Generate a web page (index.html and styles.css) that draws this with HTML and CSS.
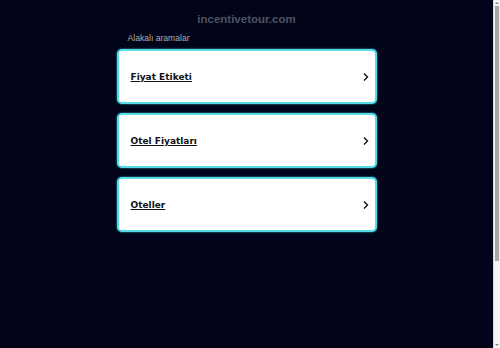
FILE: index.html
```html
<!DOCTYPE html>
<html lang="tr">
<head>
<meta charset="utf-8">
<title>incentivetour.com</title>
<link rel="stylesheet" href="styles.css">
</head>
<body>
<div class="page">
  <main class="main">
    <h1 class="domain">incentivetour.com</h1>
    <div class="block">
      <p class="label">Alakalı aramalar</p>
      <a class="card" href="#"><span class="card-text">Fiyat Etiketi</span><svg class="chev" viewBox="0 0 8 10" width="8" height="10"><path d="M2 1.5 L5.5 5 L2 8.5" fill="none" stroke="#111" stroke-width="1.4"/></svg></a>
      <a class="card" href="#"><span class="card-text">Otel Fiyatları</span><svg class="chev" viewBox="0 0 8 10" width="8" height="10"><path d="M2 1.5 L5.5 5 L2 8.5" fill="none" stroke="#111" stroke-width="1.4"/></svg></a>
      <a class="card" href="#"><span class="card-text">Oteller</span><svg class="chev" viewBox="0 0 8 10" width="8" height="10"><path d="M2 1.5 L5.5 5 L2 8.5" fill="none" stroke="#111" stroke-width="1.4"/></svg></a>
    </div>
  </main>
  <div class="scrollbar">
    <div class="arrow arrow-up"></div>
    <div class="thumb"></div>
    <div class="arrow arrow-down"></div>
  </div>
</div>
</body>
</html>
```
FILE: styles.css
```css
html, body {
  margin: 0;
  padding: 0;
  height: 348px;
  overflow: hidden;
}
.page {
  display: flex;
  height: 348px;
  background: #020519;
}
.main {
  flex: 1;
  display: flex;
  flex-direction: column;
  align-items: center;
}
.domain {
  margin: 12px 0 0 0;
  font-family: "Liberation Sans", Arial, sans-serif;
  font-weight: bold;
  font-size: 11.5px;
  line-height: 14px;
  color: #4e5260;
}
.block {
  width: 260px;
  display: flex;
  flex-direction: column;
}
.label {
  margin: 7px 0 5px 11px;
  font-family: "Liberation Sans", Arial, sans-serif;
  font-size: 8.6px;
  line-height: 11px;
  color: #a9abb3;
}
.card {
  height: 55px;
  box-sizing: border-box;
  margin-bottom: 9px;
  background: #ffffff;
  border: 2px solid #55dce8;
  border-radius: 5px;
  box-shadow: 0 0 2px #3fc6d4;
  display: flex;
  align-items: center;
  justify-content: space-between;
  padding: 0 5px 0 12px;
  text-decoration: none;
}
.card-text {
  font-family: "DejaVu Sans", Verdana, sans-serif;
  font-weight: bold;
  font-size: 9px;
  color: #111111;
  text-decoration: underline;
}
.chev {
  display: block;
}
.scrollbar {
  width: 6px;
  background: #f4f4f4;
  border-left: 1px solid #d8d8d8;
  display: flex;
  flex-direction: column;
  align-items: center;
}
.arrow {
  width: 0;
  height: 0;
  border-left: 2px solid transparent;
  border-right: 2px solid transparent;
}
.arrow-up {
  margin-top: 2px;
  border-bottom: 2px solid #8a8a8a;
}
.arrow-down {
  margin-top: auto;
  margin-bottom: 2px;
  border-top: 2px solid #8a8a8a;
}
.thumb {
  margin-top: 2px;
  width: 4px;
  height: 255px;
  background: #a6a6a6;
}
```
